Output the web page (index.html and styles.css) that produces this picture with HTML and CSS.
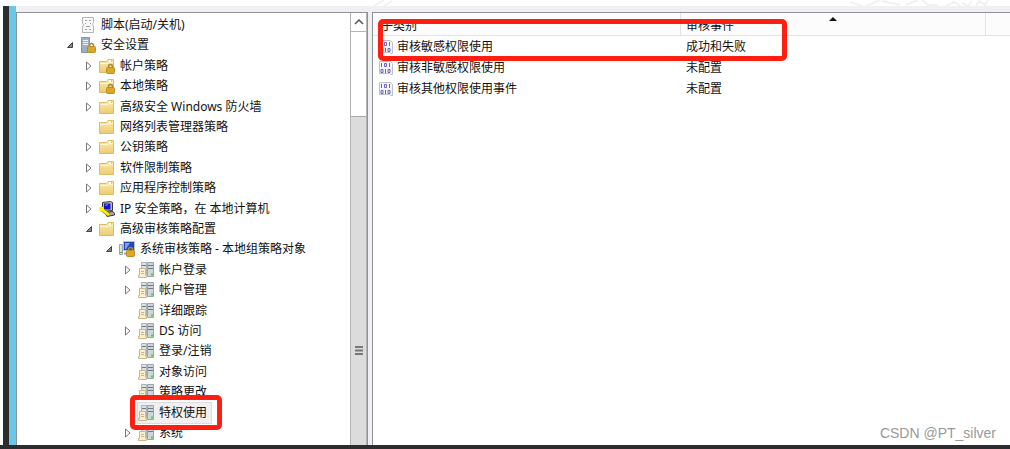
FILE: index.html
```
<!DOCTYPE html>
<html lang="zh-CN">
<head>
    <meta charset="UTF-8">
    <meta name="viewport" content="width=device-width, initial-scale=1.0">
    <title>本地组策略编辑器</title>
    <link rel="stylesheet" href="styles.css">
</head>
<body>
    <!-- 图标 -->
    <svg class="sprite" aria-hidden="true">
        <linearGradient id="gold" x1="0" y1="0" x2="0" y2="1">
            <stop offset="0" stop-color="#fdebae"/>
            <stop offset="1" stop-color="#eccb72"/>
        </linearGradient>
        <symbol id="open" viewBox="0 0 10 10"><path d="M7.500 2.500v5H2.500z" fill="#888" stroke="#444"/></symbol>
        <symbol id="closed" viewBox="0 0 10 10"><path d="M2.500 1v8L7 5z" fill="#fff" stroke="#777"/></symbol>
        <symbol id="lock" viewBox="0 0 16 16">
            <path d="M9.500 10V8.500a2 2 0 0 1 4 0V10" fill="none" stroke="#a58a3e" stroke-width="1.500"/>
            <rect x="7.500" y="9.500" width="8" height="6" rx="1" fill="#dba928" stroke="#b98d25"/>
        </symbol>
        <symbol id="folder" viewBox="0 0 16 16">
            <path d="M.5 3.500h7l1.500-2h5.500v13H.5z" fill="url(#gold)" stroke="#dcbc6c"/>
            <path d="M10 3h3" stroke="#fff" stroke-width="1.500"/>
            <path d="M12 3h1" stroke="#5aa0d8"/>
            <path d="M1 5.500h8l1-1h4" fill="none" stroke="#fff6d4"/>
        </symbol>
        <symbol id="folder-lock" viewBox="0 0 16 16"><use href="#folder"/><use href="#lock"/></symbol>
        <symbol id="script" viewBox="0 0 16 16">
            <path d="M2.500.5h11v5l-1 2 1 2v6h-11V10l1-2-1-2z" fill="#f8f8f8" stroke="#b4b4b4"/>
            <path d="M5 3.500h2M9 3.500h2M5 6.500h1M10 6.500h1M6 9.500h4M5 12.500h2M9 12.500h2" stroke="#a0a0a0"/>
        </symbol>
        <symbol id="server-lock" viewBox="0 0 16 16">
            <path d="M1.500.5h8v15h-8z" fill="#9db0be" stroke="#8296a5"/>
            <path d="M3 3.500h5M3 5.500h5M3 7.500h5" stroke="#edf3f7"/>
            <use href="#lock"/>
        </symbol>
        <symbol id="ipsec" viewBox="0 0 16 16">
            <path d="M3.500 1.500l8-1 2 1v8l-8 1-2-1z" fill="#b8b8c4" stroke="#333"/>
            <path d="M5 2.500h6.500v6H5z" fill="#1616c8"/>
            <path d="M6 4.500l3-1" stroke="#7d8cff"/>
            <path d="M6 11.500l8-1 1.500 2v1.500L8 15.500z" fill="#aaa" stroke="#333"/>
            <path d="M2.500 8l7.500 6" stroke="#8b8500" stroke-width="4"/>
            <path d="M2.500 8l7.500 6" stroke="#ffef00" stroke-width="2.500"/>
            <circle cx="2.500" cy="8" r="2.500" fill="#ffef00"/>
        </symbol>
        <symbol id="computer-lock" viewBox="0 0 16 16">
            <path d="M.5 3.500h3v10h-3z" fill="#d9dde2" stroke="#9aa2aa"/>
            <path d="M1 11.500h2" stroke="#40b840"/>
            <path d="M4.500.5h11v9h-11z" fill="#2448b8" stroke="#b8bfc8"/>
            <path d="M6 2h5L7 8H6z" fill="#7e9ded"/>
            <path d="M5 12.500h5" stroke="#9aa2aa" stroke-width="2"/>
            <use href="#lock"/>
        </symbol>
        <symbol id="servers" viewBox="0 0 16 16">
            <path d="M3.500.5h5v12h-5z" fill="#dde2e4" stroke="#aab3b8"/>
            <path d="M9.500.5h6v14h-6z" fill="#cfd6d9" stroke="#9aa5ab"/>
            <path d="M4 3.500h4M10 3.500h5M10 6.500h5" stroke="#6d7a82"/>
            <path d="M13 12.500h2" stroke="#42d832" stroke-width="2"/>
            <path d="M1.500 6.500h6v7h1v2h-8v-2h1z" fill="#fbf0cb" stroke="#c9b88c"/>
            <path d="M3 9.500h3M3 11.500h3" stroke="#c4b58c"/>
        </symbol>
        <symbol id="policy" viewBox="0 0 16 16">
            <path d="M1.500 1.500h11l2 2v11h-2l-1-1h-10z" fill="#f4f4f8" stroke="#c0c0c6"/>
            <path d="M3.500 3v4M11.500 3v4M7.500 9v4" stroke="#6a64bc"/>
            <path d="M6.500 3.500h2v3h-2zM3 9.500h2v3H3zM10 9.500h2v3h-2z" fill="none" stroke="#6a64bc"/>
        </symbol>
    </svg>

    <!-- 顶部浅色水印 -->
    <svg class="haze" viewBox="0 0 640 6" aria-hidden="true">
        <path d="M4 6l10-6M14 6l8-5M480 2l12 4M496 6l14-6M512 1l18 4M536 5l12-5M552 0l6 5h10M576 6l8-4 6 4M592 3l6 3 4-5M606 6l3-5 6 4 3-5" fill="none" stroke="#f1f1f1" stroke-width="2"/>
    </svg>

    <div class="window">
        <div class="edge"></div>
        <main class="panes">
            <section class="tree-pane">
                <ul class="tree" role="tree" aria-label="控制台树">
                    <li class="row level-1" role="treeitem"><i class="arrow"></i><svg class="icon"><use href="#script"/></svg>脚本(启动/关机)</li>
                    <li class="row level-1" role="treeitem"><svg class="arrow"><use href="#open"/></svg><svg class="icon"><use href="#server-lock"/></svg>安全设置</li>
                    <li class="row level-2" role="treeitem"><svg class="arrow"><use href="#closed"/></svg><svg class="icon"><use href="#folder-lock"/></svg>帐户策略</li>
                    <li class="row level-2" role="treeitem"><svg class="arrow"><use href="#closed"/></svg><svg class="icon"><use href="#folder-lock"/></svg>本地策略</li>
                    <li class="row level-2" role="treeitem"><svg class="arrow"><use href="#closed"/></svg><svg class="icon"><use href="#folder"/></svg>高级安全 Windows 防火墙</li>
                    <li class="row level-2" role="treeitem"><i class="arrow"></i><svg class="icon"><use href="#folder"/></svg>网络列表管理器策略</li>
                    <li class="row level-2" role="treeitem"><svg class="arrow"><use href="#closed"/></svg><svg class="icon"><use href="#folder"/></svg>公钥策略</li>
                    <li class="row level-2" role="treeitem"><svg class="arrow"><use href="#closed"/></svg><svg class="icon"><use href="#folder"/></svg>软件限制策略</li>
                    <li class="row level-2" role="treeitem"><svg class="arrow"><use href="#closed"/></svg><svg class="icon"><use href="#folder"/></svg>应用程序控制策略</li>
                    <li class="row level-2" role="treeitem"><svg class="arrow"><use href="#closed"/></svg><svg class="icon"><use href="#ipsec"/></svg>IP 安全策略，在 本地计算机</li>
                    <li class="row level-2" role="treeitem"><svg class="arrow"><use href="#open"/></svg><svg class="icon"><use href="#folder"/></svg>高级审核策略配置</li>
                    <li class="row level-3" role="treeitem"><svg class="arrow"><use href="#open"/></svg><svg class="icon"><use href="#computer-lock"/></svg>系统审核策略 - 本地组策略对象</li>
                    <li class="row level-4" role="treeitem"><svg class="arrow"><use href="#closed"/></svg><svg class="icon"><use href="#servers"/></svg>帐户登录</li>
                    <li class="row level-4" role="treeitem"><svg class="arrow"><use href="#closed"/></svg><svg class="icon"><use href="#servers"/></svg>帐户管理</li>
                    <li class="row level-4" role="treeitem"><i class="arrow"></i><svg class="icon"><use href="#servers"/></svg>详细跟踪</li>
                    <li class="row level-4" role="treeitem"><svg class="arrow"><use href="#closed"/></svg><svg class="icon"><use href="#servers"/></svg>DS 访问</li>
                    <li class="row level-4" role="treeitem"><i class="arrow"></i><svg class="icon"><use href="#servers"/></svg>登录/注销</li>
                    <li class="row level-4" role="treeitem"><i class="arrow"></i><svg class="icon"><use href="#servers"/></svg>对象访问</li>
                    <li class="row level-4" role="treeitem"><i class="arrow"></i><svg class="icon"><use href="#servers"/></svg>策略更改</li>
                    <li class="row level-4" role="treeitem" aria-selected="true"><i class="arrow"></i><span class="selected"><svg class="icon"><use href="#servers"/></svg>特权使用</span><span class="mark mark-tree"></span></li>
                    <li class="row level-4" role="treeitem"><svg class="arrow"><use href="#closed"/></svg><svg class="icon"><use href="#servers"/></svg>系统</li>
                    <li class="row level-4" role="treeitem"><i class="arrow"></i><svg class="icon"><use href="#servers"/></svg></li>
                </ul>
                <div class="scrollbar">
                    <button class="scroll-up" type="button" aria-label="向上滚动">
                        <svg width="10" height="6" viewBox="0 0 10 6"><path d="M1 5l4-4 4 4" fill="none" stroke="#555" stroke-width="1.500"/></svg>
                    </button>
                    <div class="scroll-track"></div>
                    <div class="scroll-thumb">
                        <svg width="8" height="9" viewBox="0 0 8 9"><path d="M0 1h8M0 4.500h8M0 8h8" stroke="#777" stroke-width="2"/></svg>
                    </div>
                </div>
            </section>
            <section class="list-pane">
                <table class="list">
                    <thead>
                        <tr><th class="col-name">子类别</th><th class="col-event">审核事件<span class="sort"></span></th><th></th></tr>
                    </thead>
                    <tbody>
                        <tr><td><span class="item"><svg class="icon"><use href="#policy"/></svg>审核敏感权限使用</span></td><td>成功和失败</td><td></td></tr>
                        <tr><td><span class="item"><svg class="icon"><use href="#policy"/></svg>审核非敏感权限使用</span></td><td>未配置</td><td></td></tr>
                        <tr><td><span class="item"><svg class="icon"><use href="#policy"/></svg>审核其他权限使用事件</span></td><td>未配置</td><td></td></tr>
                    </tbody>
                </table>
                <span class="mark mark-list"></span>
                <span class="credit">CSDN @PT_silver</span>
            </section>
        </main>
    </div>
</body>
</html>
```
FILE: styles.css
```
* {
    box-sizing: border-box;
}
body {
    margin: 0;
    background: #fff;
    color: #111;
    font-family: "Noto Sans", "Noto Sans CJK SC", sans-serif;
    font-size: 12px;
}
.sprite {
    position: absolute;
    width: 0;
    height: 0;
}
.haze {
    position: absolute;
    top: 0;
    right: 0;
    width: 640px;
    height: 6px;
}
.window {
    display: flex;
    height: 100vh;
    padding: 6px 0 0 3px;
    border-bottom: 4px solid #2d2d2f;
    overflow: hidden;
}
.edge {
    flex: none;
    width: 13px;
    background: #68c8e8;
    border-left: 6px solid #2d2d2f;
}
.panes {
    display: flex;
    flex: 1;
    min-width: 0;
    padding-top: 6px;
    background: #f0f0f0;
}
.tree-pane {
    display: flex;
    flex: none;
    width: 352px;
    background: #fff;
    border: 1px solid #8d919c;
    border-bottom: 0;
    overflow: hidden;
}

/* 左侧树 */
.tree {
    flex: 1;
    margin: 0;
    padding: 2px 0 0;
    list-style: none;
}
.row {
    position: relative;
    display: flex;
    align-items: center;
    gap: 5px;
    height: 20px;
    line-height: 20px;
    white-space: nowrap;
}
.row:nth-child(5n),
.row:nth-child(5n+3) {
    height: 21px;
}
.level-1 { padding-left: 48px; }
.level-2 { padding-left: 67px; }
.level-3 { padding-left: 87px; }
.level-4 { padding-left: 106px; }
.arrow {
    flex: none;
    width: 10px;
    height: 10px;
}
.icon {
    flex: none;
    width: 16px;
    height: 16px;
}
.selected {
    display: flex;
    align-items: center;
    gap: 5px;
    padding-right: 4px;
    background: #f0f0f0;
    outline: 1px solid #dcdcdc;
}

/* 滚动条 */
.scrollbar {
    display: flex;
    flex-direction: column;
    width: 17px;
    background: #fff;
    border: 1px solid #b4b4b4;
    border-width: 0 1px;
}
.scroll-up {
    display: flex;
    align-items: center;
    justify-content: center;
    height: 19px;
    padding: 0;
    background: #fff;
    border: 0;
    border-bottom: 1px solid #b4b4b4;
}
.scroll-track {
    flex: 1 1 84px;
}
.scroll-thumb {
    display: flex;
    flex: 4 1 330px;
    align-items: center;
    justify-content: center;
    padding-top: 140px;
    background: #dcdcdc;
    border-top: 1px solid #a8a8a8;
}

/* 右侧列表 */
.list-pane {
    position: relative;
    flex: 1;
    min-width: 0;
    margin-left: 4px;
    background: #fff;
    border: 1px solid #8d919c;
    border-width: 1px 0 0 1px;
}
.list {
    width: 100%;
    table-layout: fixed;
    border-collapse: separate;
    border-spacing: 0;
}
.list th {
    position: relative;
    height: 23px;
    padding: 4px 5px 0;
    background: #fcfcfc;
    border: 1px solid #e2e2e2;
    border-width: 0 1px 1px 0;
    font-weight: normal;
    line-height: 18px;
    text-align: left;
}
.list th:last-child {
    border-right: 0;
}
.list .col-name {
    width: 308px;
    padding-left: 8px;
}
.col-event {
    width: 305px;
}
.list td {
    height: 21px;
    padding: 0 5px;
    line-height: 21px;
}
.item {
    display: flex;
    align-items: center;
    gap: 3px;
}
.sort {
    position: absolute;
    top: 4px;
    left: 50%;
    border: 4px solid transparent;
    border-top: 0;
    border-bottom-color: #111;
    transform: translateX(-50%);
}

/* 红框标注 */
.mark {
    position: absolute;
    border: 5px solid #fe1f10;
    border-radius: 5px;
}
.mark-list {
    top: 6px;
    left: 5px;
    width: 409px;
    height: 42px;
}
.mark-tree {
    top: -7px;
    left: 113px;
    z-index: 1;
    width: 92px;
    height: 35px;
}
.credit {
    position: absolute;
    right: 14px;
    bottom: 2px;
    color: #999;
    font-family: "Liberation Sans", Arial, sans-serif;
    font-size: 14px;
    line-height: 20px;
}
```
